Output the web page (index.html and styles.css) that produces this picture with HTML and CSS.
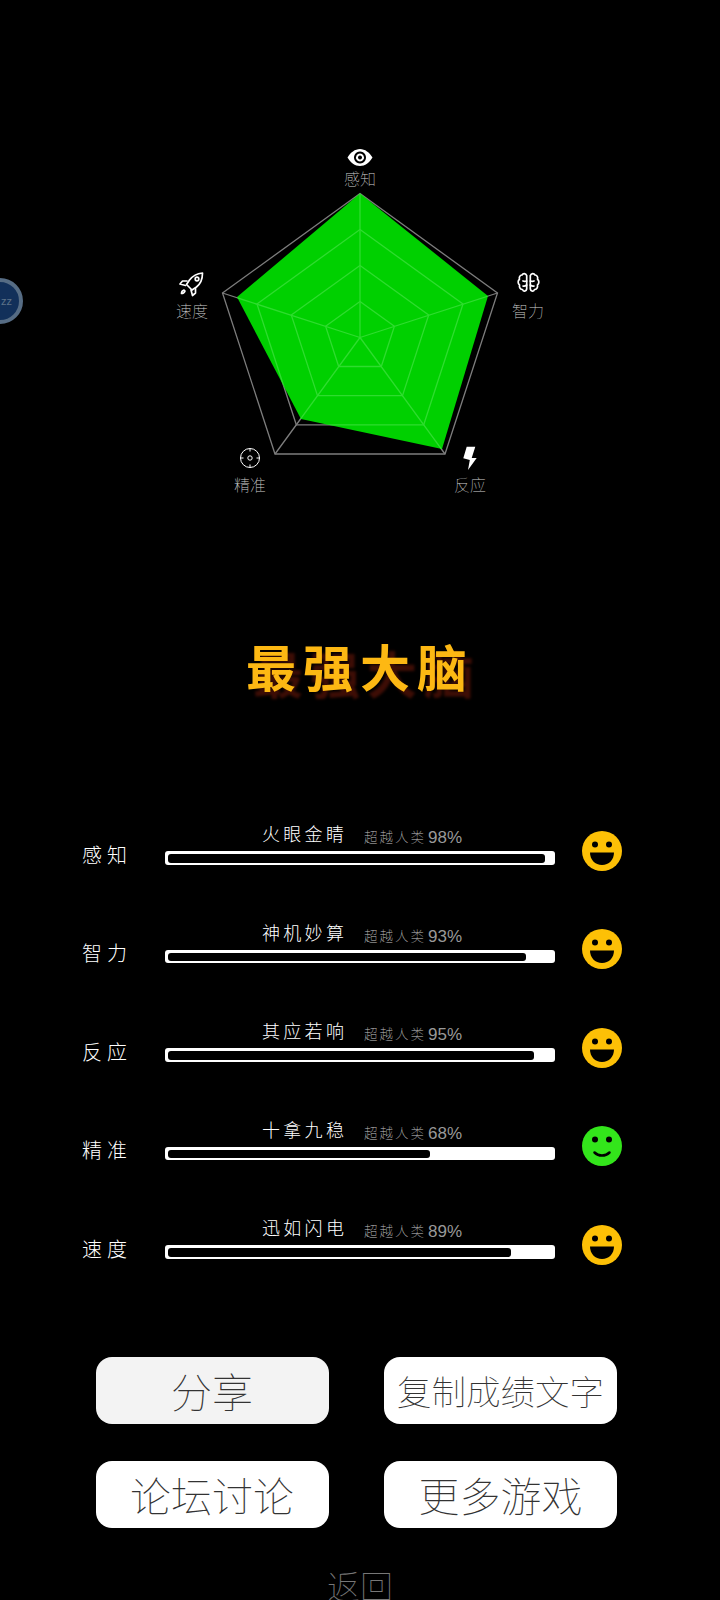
FILE: index.html
```html
<!DOCTYPE html>
<html lang="zh-CN">
<head>
<meta charset="utf-8">
<title>最强大脑</title>
<link rel="stylesheet" href="styles.css">
</head>
<body>
<div class="float-ball"><span class="float-text">zz</span></div>

<main class="page">
  <section class="radar">
    <svg class="radar-svg" width="720" height="500" viewBox="0 0 720 500">
      <defs>
        <g id="web">
          <polygon points="360,193.500 497.500,293 445,454 275,454 222.500,293"/>
          <polygon points="360,229.500 463,304 423.700,424.800 296.300,424.800 257,304"/>
          <polygon points="360,265.500 428.700,315 402.500,395.700 317.500,395.700 291.300,315"/>
          <polygon points="360,301.500 394.400,326.300 381.300,366.500 338.700,366.500 325.600,326.300"/>
          <path d="M360 337.500V193.500M360 337.500L497.500 293M360 337.500L445 454M360 337.500L275 454M360 337.500L222.500 293"/>
        </g>
        <clipPath id="score-clip">
          <polygon points="360,193.500 488,296 442,449 301,419 237,297"/>
        </clipPath>
      </defs>
      <use href="#web" class="web-dark"/>
      <polygon class="score" points="360,193.500 488,296 442,449 301,419 237,297"/>
      <g clip-path="url(#score-clip)"><use href="#web" class="web-light"/></g>

      <!-- eye -->
      <path class="icon-fill" fill-rule="evenodd" d="M347.500 157.500c3-5 7.500-8.500 12.500-8.500s9.500 3.500 12.500 8.500c-3 5-7.500 8.500-12.500 8.500s-9.500-3.500-12.500-8.500zM360 151.500a6 6 0 1 0 .01 0zM360 153.500a4 4 0 1 1-.01 0zM360 155.500a2 2 0 1 0 .01 0z"/>
      <!-- rocket -->
      <g class="icon-line">
        <path d="M202.500 273c-5 .5-9.500 2.500-13 7l-3 4.500 5.500 5.500 4.500-3c4.500-3.500 6-8.500 6-14z"/>
        <path d="M187 281h-4.500l-2.500 3 5.500 1.500M195.500 288.500V293l-3 2.500-1.500-5.500"/>
        <circle cx="197" cy="279" r="1.800"/>
        <path d="M184 290c-1.500 .5-2.500 2-2.500 3.500 1.500 0 3-1 3.500-2.500z"/>
      </g>
      <!-- brain -->
      <g class="icon-line">
        <path d="M526.700 275.500c-1-2.500-3.700-2.500-4.700-.5-2 0-3.200 2.200-2.500 4.200-1.800 1.300-1.800 4.500 0 5.800-.5 2.500 1 4.500 3 4.500 1 2.500 3.700 2.200 4.200-.5z"/>
        <path d="M530.300 275.500c1-2.500 3.700-2.500 4.700-.5 2 0 3.200 2.200 2.500 4.200 1.800 1.300 1.800 4.500 0 5.800 .5 2.500-1 4.500-3 4.500-1 2.500-3.700 2.200-4.200-.5z"/>
        <path d="M523 281c1 .5 2 .5 3.700 0M523 286c1.500 .5 2.500 0 3.700-1M534 281c-1 .5-2 .5-3.700 0M534 286c-1.500 .5-2.500 0-3.700-1"/>
      </g>
      <!-- crosshair -->
      <g class="icon-thin">
        <circle cx="250" cy="458" r="9.500"/>
        <circle cx="250" cy="458" r="2.200"/>
        <path d="M250 448.500v3M250 464.500v3M240.500 458h3M256.500 458h3"/>
      </g>
      <!-- bolt -->
      <path class="icon-fill" d="M466.700 446.700h8.600l-3.600 11.200h5l-8.700 12.100 1.800-10-6.500-1.700z"/>

      <text class="axis" x="360" y="185">感知</text>
      <text class="axis" x="528" y="317">智力</text>
      <text class="axis" x="470" y="491">反应</text>
      <text class="axis" x="250" y="491">精准</text>
      <text class="axis" x="192" y="317">速度</text>
    </svg>
  </section>

  <h1 class="title">最强大脑</h1>

  <section class="scores">
    <div class="row">
      <div class="row-label">感知</div>
      <div class="row-main">
        <div class="row-caption"><span class="honor">火眼金睛</span><span class="beat">超越人类</span><span class="pct">98%</span></div>
        <div class="bar"><div class="bar-fill" style="width:98%"></div></div>
      </div>
      <svg class="face" viewBox="0 0 40 40"><circle class="face-gold" cx="20" cy="20" r="20"/><circle cx="13" cy="13.500" r="3"/><circle cx="27" cy="13.500" r="3"/><path d="M8 21.500h24c0 7-5 12.500-12 12.500S8 28.500 8 21.500z"/></svg>
    </div>
    <div class="row">
      <div class="row-label">智力</div>
      <div class="row-main">
        <div class="row-caption"><span class="honor">神机妙算</span><span class="beat">超越人类</span><span class="pct">93%</span></div>
        <div class="bar"><div class="bar-fill" style="width:93%"></div></div>
      </div>
      <svg class="face" viewBox="0 0 40 40"><circle class="face-gold" cx="20" cy="20" r="20"/><circle cx="13" cy="13.500" r="3"/><circle cx="27" cy="13.500" r="3"/><path d="M8 21.500h24c0 7-5 12.500-12 12.500S8 28.500 8 21.500z"/></svg>
    </div>
    <div class="row">
      <div class="row-label">反应</div>
      <div class="row-main">
        <div class="row-caption"><span class="honor">其应若响</span><span class="beat">超越人类</span><span class="pct">95%</span></div>
        <div class="bar"><div class="bar-fill" style="width:95%"></div></div>
      </div>
      <svg class="face" viewBox="0 0 40 40"><circle class="face-gold" cx="20" cy="20" r="20"/><circle cx="13" cy="13.500" r="3"/><circle cx="27" cy="13.500" r="3"/><path d="M8 21.500h24c0 7-5 12.500-12 12.500S8 28.500 8 21.500z"/></svg>
    </div>
    <div class="row">
      <div class="row-label">精准</div>
      <div class="row-main">
        <div class="row-caption"><span class="honor">十拿九稳</span><span class="beat">超越人类</span><span class="pct">68%</span></div>
        <div class="bar"><div class="bar-fill" style="width:68%"></div></div>
      </div>
      <svg class="face" viewBox="0 0 40 40"><circle class="face-green" cx="20" cy="20" r="20"/><circle cx="13" cy="13.500" r="3"/><circle cx="27" cy="13.500" r="3"/><path class="smile" d="M12.500 26.500c4 4 11 4 15 0"/></svg>
    </div>
    <div class="row">
      <div class="row-label">速度</div>
      <div class="row-main">
        <div class="row-caption"><span class="honor">迅如闪电</span><span class="beat">超越人类</span><span class="pct">89%</span></div>
        <div class="bar"><div class="bar-fill" style="width:89%"></div></div>
      </div>
      <svg class="face" viewBox="0 0 40 40"><circle class="face-gold" cx="20" cy="20" r="20"/><circle cx="13" cy="13.500" r="3"/><circle cx="27" cy="13.500" r="3"/><path d="M8 21.500h24c0 7-5 12.500-12 12.500S8 28.500 8 21.500z"/></svg>
    </div>
  </section>

  <section class="actions">
    <button class="btn btn-pressed">分享</button>
    <button class="btn btn-small">复制成绩文字</button>
    <button class="btn">论坛讨论</button>
    <button class="btn">更多游戏</button>
  </section>

  <div class="back">返回</div>
</main>
</body>
</html>
```

FILE: styles.css
```css
html, body {
  margin: 0;
  padding: 0;
  height: 1600px;
  overflow: hidden;
  background: #000;
  font-family: "Noto Sans CJK SC", "Noto Sans", sans-serif;
}

.page {
  display: flex;
  flex-direction: column;
  align-items: center;
  width: 720px;
}

.float-ball {
  position: absolute;
  left: -23px;
  top: 278px;
  width: 38px;
  height: 38px;
  border: 4px solid #566c84;
  border-radius: 50%;
  background: #12305a;
  display: flex;
  align-items: center;
  justify-content: flex-end;
}

.float-text {
  font: 11px "Liberation Sans", sans-serif;
  color: #5d7288;
  padding-right: 7px;
}

/* radar chart */
.radar { height: 500px; width: 720px; }
.radar-svg { display: block; }

.web-dark { fill: none; stroke: #7d7d7d; stroke-width: 1.300; }
.web-light { fill: none; stroke: #2fdc2f; stroke-width: 1.300; }
.score { fill: #00d000; }

.icon-fill { fill: #fff; }
.icon-line { fill: none; stroke: #fff; stroke-width: 1.700; stroke-linejoin: round; stroke-linecap: round; }
.icon-thin { fill: none; stroke: #fff; stroke-width: 1; }

.axis {
  font-size: 16px;
  font-weight: 100;
  fill: #d0d0d0;
  text-anchor: middle;
}

/* heading */
.title {
  margin: 130px 0 0;
  height: 70px;
  line-height: 70px;
  font-size: 50px;
  font-weight: 700;
  letter-spacing: 7px;
  color: #fdb813;
  text-shadow: 7px 7px 3px #3f0e06;
}

/* score rows */
.scores {
  margin-top: 118.500px;
  display: flex;
  flex-direction: column;
  gap: 52.600px;
  width: 720px;
}

.row {
  display: flex;
  align-items: flex-end;
  height: 46px;
}

.row-label {
  width: 83px;
  margin-left: 82px;
  margin-bottom: -3px;
  font-size: 20px;
  line-height: 26px;
  letter-spacing: 5px;
  font-weight: 300;
  color: #fff;
}

.row-main { width: 390px; }

.row-caption {
  display: flex;
  align-items: flex-end;
  height: 30px;
  padding-left: 97px;
}

.honor {
  width: 102px;
  margin-bottom: 6px;
  font-size: 18px;
  line-height: 24px;
  font-weight: 300;
  letter-spacing: 3.300px;
  color: #fff;
}

.beat {
  width: 64px;
  margin-bottom: 5px;
  font-size: 13.500px;
  line-height: 20px;
  font-weight: 100;
  letter-spacing: 2px;
  color: #c4c4c4;
}

.pct {
  margin-bottom: 3px;
  font: 17px/20px "Liberation Sans", sans-serif;
  color: #999;
}

.bar {
  height: 13.500px;
  box-sizing: border-box;
  padding: 3px 2px 2px 3px;
  background: #fff;
  border-radius: 3px;
}

.bar-fill {
  height: 8.500px;
  background: #000;
  border-radius: 3px;
}

.face {
  width: 40px;
  height: 40px;
  margin-left: 27px;
  margin-bottom: -6px;
  fill: #000;
}

.face .face-gold { fill: #fdc006; }
.face .face-green { fill: #33e51b; }
.face .smile { fill: none; stroke: #000; stroke-width: 2.500; stroke-linecap: round; }

/* action buttons */
.actions {
  align-self: flex-start;
  margin: 98px 0 0 95.500px;
  display: grid;
  grid-template-columns: 233px 233px;
  column-gap: 55.500px;
  row-gap: 36.500px;
}

.btn {
  height: 67.500px;
  padding: 0;
  border: 0;
  border-radius: 16px;
  background: #fff;
  color: #333;
  font-family: inherit;
  font-size: 41px;
  line-height: 1;
  font-weight: 100;
}

.btn-pressed { background: #f3f3f3; }
.btn-small { font-size: 34.500px; }

.back {
  margin-top: 36.500px;
  font-size: 33px;
  line-height: 40px;
  font-weight: 100;
  color: #777;
}
```
